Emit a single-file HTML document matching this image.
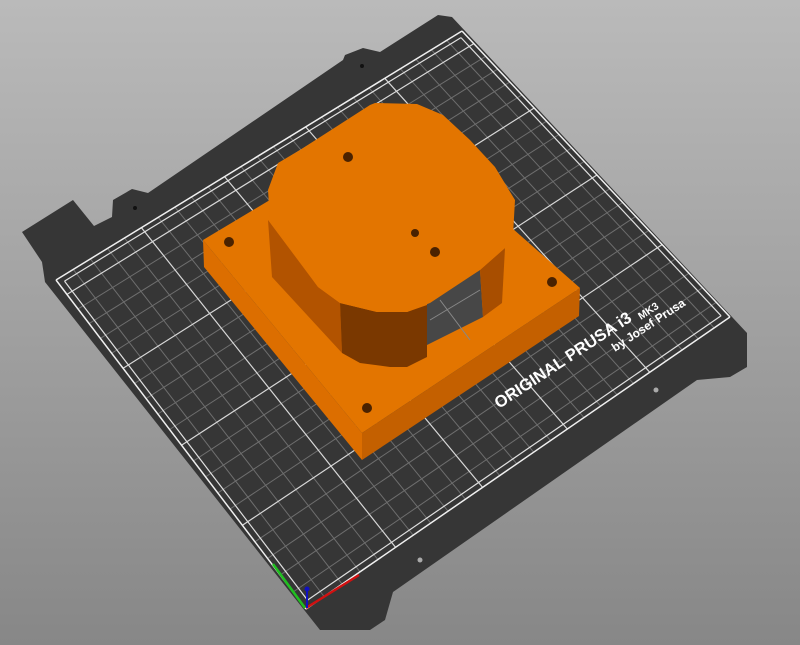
<!DOCTYPE html>
<html><head><meta charset="utf-8"><style>
html,body{margin:0;padding:0;width:800px;height:645px;overflow:hidden}
body{background:linear-gradient(#bababa,#878787)}
svg{position:absolute;left:0;top:0}
</style></head><body>
<svg id="s" width="800" height="645" viewBox="0 0 800 645" xmlns="http://www.w3.org/2000/svg">
<polygon fill="#363636" points="22,232 73,200 94,226 112,217 113,200 132,189 148,193 343,60 345,55 363,48 380,52 438,15 452,17 747,333 747,367 730,377 697,380 393,592 385,620 370,630 320,630 45,282 42,262"/>
<g id="grid"></g>
<circle cx="656" cy="390" r="2.5" fill="#aaa"/>
<circle cx="420" cy="560" r="2.5" fill="#aaa"/>
<circle cx="135" cy="208" r="2" fill="#111"/>
<circle cx="362" cy="66" r="2" fill="#111"/>
<g fill="#fff" font-family="Liberation Sans, sans-serif" font-weight="bold">
<text transform="translate(499,409) rotate(-33.5)" font-size="16.5">ORIGINAL PRUSA i3</text>
<text transform="translate(641,320) rotate(-33.5)" font-size="10.5">MK3</text>
<text transform="translate(615,352) rotate(-33.5)" font-size="12">by Josef Prusa</text>
</g>
<line x1="305" y1="608" x2="273" y2="564" stroke="#1fc01f" stroke-width="2.5"/>
<line x1="306" y1="608" x2="359" y2="575" stroke="#d01010" stroke-width="2.5"/>
<line x1="307" y1="608" x2="307" y2="590" stroke="#1010c0" stroke-width="2"/>
<circle cx="307" cy="589" r="2.5" fill="#1010c0"/>
<!-- base box -->
<polygon fill="#e37500" points="203,240 395,125 580,288 362,433"/>
<polygon fill="#dc6e00" points="203,240 362,433 362,460 204,267"/>
<polygon fill="#c46000" points="362,433 580,288 579,316 362,460"/>
<!-- window -->
<polygon fill="#474747" points="427,303 480,270 483,317 427,345"/>
<line x1="440" y1="300" x2="470" y2="340" stroke="#888" stroke-width="1"/>
<line x1="430" y1="320" x2="480" y2="290" stroke="#888" stroke-width="1"/>
<!-- cylinder walls -->
<polygon fill="#b25300" points="268,220 318,287 340,303 342,353 272,277"/>
<polygon fill="#7a3800" points="340,303 377,312 407,312 427,305 427,357 407,367 390,367 360,363 342,353"/>
<polygon fill="#a84e00" points="480,270 505,248 502,303 483,317"/>
<!-- top -->
<polygon fill="#e37500" points="370,105 375,103 417,104 443,115 470,140 495,167 515,200 513,235 505,248 480,270 430,303 407,312 377,312 340,303 318,287 270,220 268,190 278,163 300,150"/>
<g fill="#4a2200">
<circle cx="348" cy="157" r="5"/><circle cx="415" cy="233" r="4"/><circle cx="435" cy="252" r="5"/>
<circle cx="229" cy="242" r="5"/><circle cx="552" cy="282" r="5"/><circle cx="367" cy="408" r="5"/>
</g>
</svg>
<script>
(function(){
var x0=306,y0=609,x1=730,y1=317,x2=462,y2=31,x3=56,y3=280;
var dx1=x1-x2,dx2=x3-x2,dx3=x0-x1+x2-x3,dy1=y1-y2,dy2=y3-y2,dy3=y0-y1+y2-y3;
var den=dx1*dy2-dx2*dy1;
var g=(dx3*dy2-dx2*dy3)/den,h=(dx1*dy3-dx3*dy1)/den;
var a=x1-x0+g*x1,b=x3-x0+h*x3,c=x0,d=y1-y0+g*y1,e=y3-y0+h*y3,f=y0;
function P(u,v){u/=250;v/=210;var w=g*u+h*v+1;return [(a*u+b*v+c)/w,(d*u+e*v+f)/w];}
var s='';
function L(u1,v1,u2,v2,col,sw){var p=P(u1,v1),q=P(u2,v2);s+='<line x1="'+p[0].toFixed(1)+'" y1="'+p[1].toFixed(1)+'" x2="'+q[0].toFixed(1)+'" y2="'+q[1].toFixed(1)+'" stroke="'+col+'" stroke-width="'+sw+'"/>';}
for(var u=10;u<250;u+=10){if(u%50)L(u,0,u,210,'#6e6e6e',1);}
for(var v=10;v<210;v+=10){if(v%50)L(0,v,250,v,'#6e6e6e',1);}
for(var u=50;u<250;u+=50)L(u,0,u,210,'#d8d8d8',1.2);
for(var v=50;v<210;v+=50)L(0,v,250,v,'#d8d8d8',1.2);
L(0,0,250,0,'#f0f0f0',1.5);L(250,0,250,210,'#f0f0f0',1.5);L(250,210,0,210,'#f0f0f0',1.5);L(0,210,0,0,'#f0f0f0',1.5);
L(3,3,247,3,'#e0e0e0',1.2);L(247,3,247,207,'#e0e0e0',1.2);L(247,207,3,207,'#e0e0e0',1.2);L(3,207,3,3,'#e0e0e0',1.2);
document.getElementById('grid').innerHTML=s;
})();
</script>
</body></html>
